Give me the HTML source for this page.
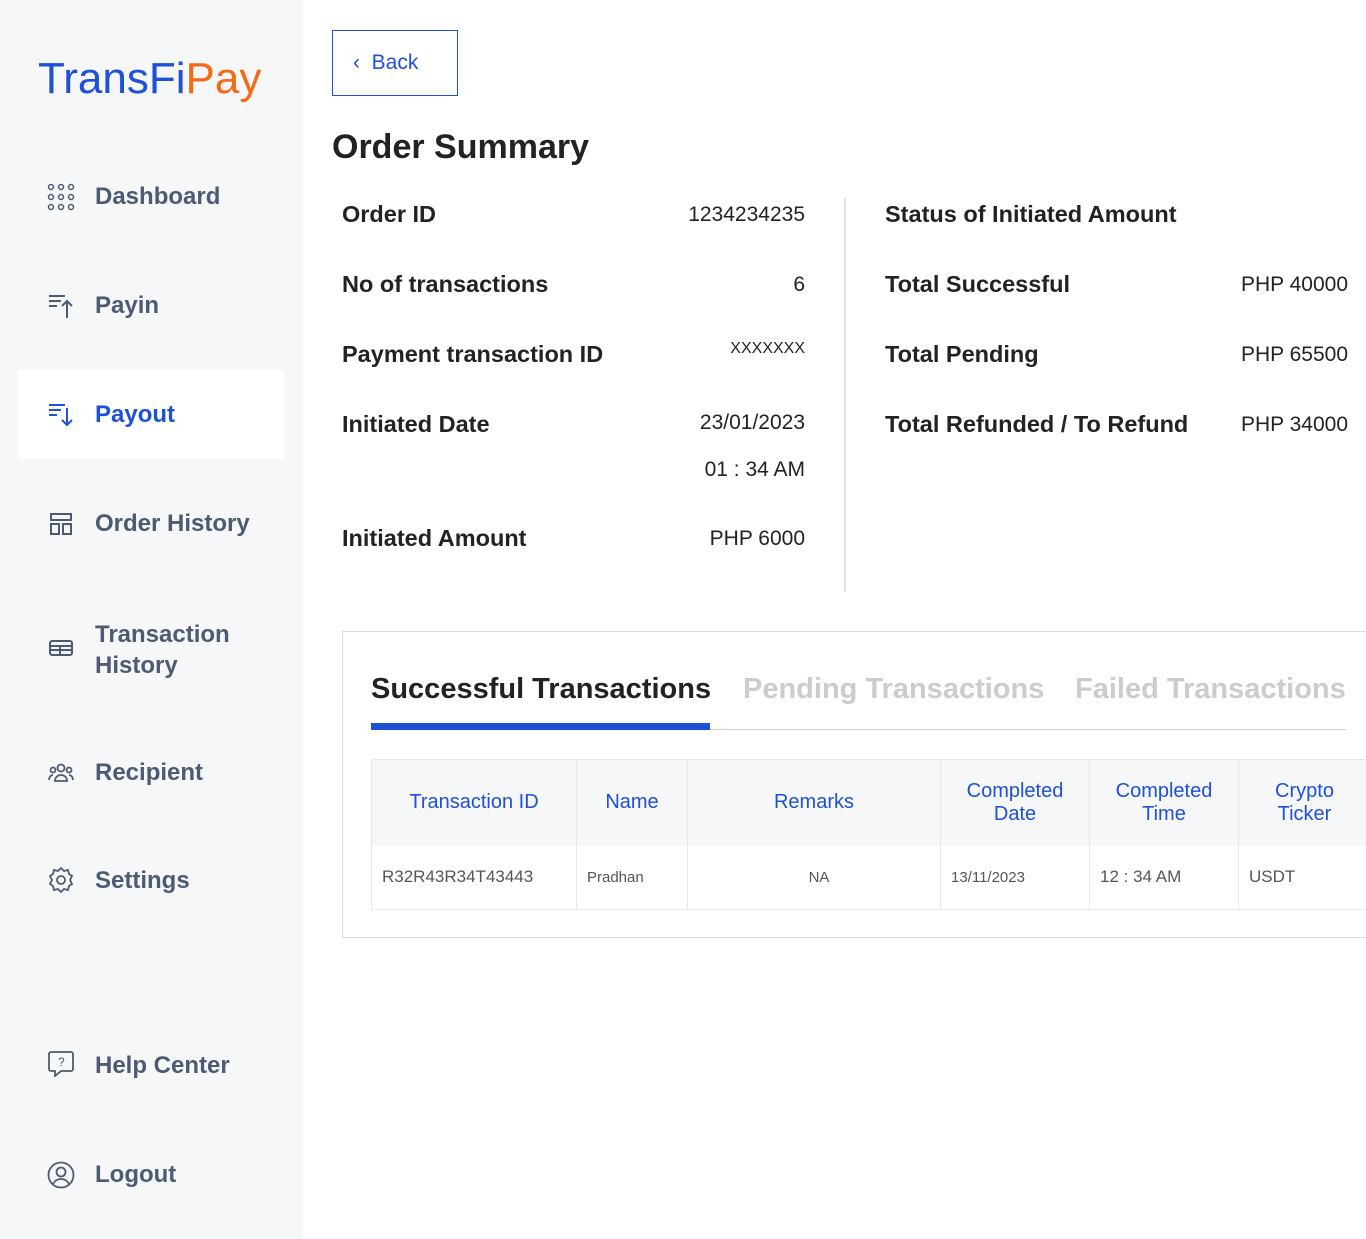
<!DOCTYPE html>
<html><head><style>
*{box-sizing:border-box;margin:0;padding:0}
body{width:1366px;height:1239px;background:#fff;font-family:"Liberation Sans",sans-serif;position:relative;overflow:hidden}
.side{position:absolute;left:0;top:0;width:303px;height:1239px;background:#f6f7f9}
.logo{position:absolute;left:38px;top:54px;font-size:44px;color:#1e50d8;letter-spacing:0px}
.logo span{color:#f36b16}
.nav{position:absolute;left:95px;font-size:24px;font-weight:bold;color:#4e5a74}
.ic{position:absolute;left:47px;width:28px;height:28px}
.act{position:absolute;left:18px;top:370px;width:266px;height:89px;background:#fff}
.t{position:absolute;font-size:23.5px;font-weight:bold;color:#222;}
.v{position:absolute;font-size:21px;color:#222;text-align:right}
th{color:#1e50d8;font-weight:normal;font-size:20px;background:#f6f7f9;border-right:1px solid #e8e8e8;height:86px}
td{font-size:17px;color:#555;border-right:1px solid #e8e8e8;height:64px;padding-left:10px}
</style></head><body>
<div class="side">
<div class="logo">TransFi<span>Pay</span></div>
<svg class="ic" style="top:183px" viewBox="0 0 28 28" fill="none" stroke="#4e5a74" stroke-width="1.5"><circle cx="4" cy="4" r="2.5"/><circle cx="14" cy="4" r="2.5"/><circle cx="24" cy="4" r="2.5"/><circle cx="4" cy="14" r="2.5"/><circle cx="14" cy="14" r="2.5"/><circle cx="24" cy="14" r="2.5"/><circle cx="4" cy="24" r="2.5"/><circle cx="14" cy="24" r="2.5"/><circle cx="24" cy="24" r="2.5"/></svg>
<div class="nav" style="top:183px">Dashboard</div>
<svg class="ic" style="top:292px" viewBox="0 0 28 28" fill="none" stroke="#4e5a74" stroke-width="2"><path d="M2 4h16M2 9h12M2 14h8M20 26V9M15 14l5-5 5 5"/></svg>
<div class="nav" style="top:292px">Payin</div>
<div class="act"></div>
<svg class="ic" style="top:401px" viewBox="0 0 28 28" fill="none" stroke="#1e50d8" stroke-width="2"><path d="M2 4h16M2 9h12M2 14h8M20 7v17M15 19l5 5 5-5"/></svg>
<div class="nav" style="top:401px;color:#1e50d8">Payout</div>
<svg class="ic" style="top:510px" viewBox="0 0 28 28" fill="none" stroke="#4e5a74" stroke-width="2"><rect x="4" y="4" width="20" height="6"/><rect x="4" y="14" width="8" height="10"/><rect x="16" y="14" width="8" height="10"/></svg>
<div class="nav" style="top:510px">Order History</div>
<svg class="ic" style="top:634px" viewBox="0 0 28 28" fill="none" stroke="#4e5a74" stroke-width="2"><rect x="3" y="7" width="22" height="14" rx="2"/><path d="M3 12h22M3 16h22M13 12v9"/></svg>
<div class="nav" style="top:619px;line-height:31px">Transaction<br>History</div>
<svg class="ic" style="top:759px" viewBox="0 0 28 28" fill="none" stroke="#4e5a74" stroke-width="1.8"><circle cx="14" cy="9" r="3.5"/><circle cx="6" cy="11" r="2.5"/><circle cx="22" cy="11" r="2.5"/><path d="M8 22c0-4 3-6 6-6s6 2 6 6zM2 21c0-3 2-5 4-5M26 21c0-3-2-5-4-5"/></svg>
<div class="nav" style="top:759px">Recipient</div>
<svg class="ic" style="top:866px" viewBox="0 0 28 28" fill="none" stroke="#4e5a74" stroke-width="1.8"><circle cx="14" cy="14" r="4"/><path d="M14 2l3 3 4-1 1 4 3 2-2 4 2 4-3 2-1 4-4-1-3 3-3-3-4 1-1-4-3-2 2-4-2-4 3-2 1-4 4 1z"/></svg>
<div class="nav" style="top:867px">Settings</div>
<svg class="ic" style="top:1049px" viewBox="0 0 28 28" fill="none" stroke="#4e5a74" stroke-width="1.8"><path d="M4 3h20a2 2 0 012 2v15a2 2 0 01-2 2H14l-6 5v-5H4a2 2 0 01-2-2V5a2 2 0 012-2z"/><text x="11" y="17" font-size="12" fill="#4e5a74" stroke="none" font-family="Liberation Sans">?</text></svg>
<div class="nav" style="top:1052px">Help Center</div>
<svg class="ic" style="top:1161px" viewBox="0 0 28 28" fill="none" stroke="#4e5a74" stroke-width="1.8"><circle cx="14" cy="14" r="12.5"/><circle cx="14" cy="11" r="4.5"/><path d="M6 23c2-4 5-5 8-5s6 1 8 5"/></svg>
<div class="nav" style="top:1161px">Logout</div>
</div>

<div style="position:absolute;left:332px;top:30px;width:126px;height:66px;border:1.5px solid #1e50d8;color:#1e50d8;font-size:21px;line-height:64px;padding-left:20px">&#8249;&nbsp; Back</div>
<div style="position:absolute;left:332px;top:128px;font-size:34px;font-weight:bold;color:#222">Order Summary</div>

<div class="t" style="left:342px;top:201px">Order ID</div><div class="v" style="right:561px;top:203px">1234234235</div>
<div class="t" style="left:342px;top:271px">No of transactions</div><div class="v" style="right:561px;top:273px">6</div>
<div class="t" style="left:342px;top:341px">Payment transaction ID</div><div class="v" style="right:561px;top:340px;font-size:16px">XXXXXXX</div>
<div class="t" style="left:342px;top:411px">Initiated Date</div><div class="v" style="right:561px;top:411px">23/01/2023</div>
<div class="v" style="right:561px;top:458px">01 : 34 AM</div>
<div class="t" style="left:342px;top:525px">Initiated Amount</div><div class="v" style="right:561px;top:527px">PHP 6000</div>
<div style="position:absolute;left:844px;top:198px;width:2px;height:394px;background:#e4e4e4"></div>
<div class="t" style="left:885px;top:201px">Status of Initiated Amount</div>
<div class="t" style="left:885px;top:271px">Total Successful</div><div class="v" style="right:18px;top:273px">PHP 40000</div>
<div class="t" style="left:885px;top:341px">Total Pending</div><div class="v" style="right:18px;top:343px">PHP 65500</div>
<div class="t" style="left:885px;top:411px">Total Refunded / To Refund</div><div class="v" style="right:18px;top:413px">PHP 34000</div>

<div style="position:absolute;left:342px;top:631px;width:1040px;height:307px;border:1.5px solid #ddd">
<div style="position:absolute;left:28px;top:41px;font-size:29px;font-weight:bold;color:#222">Successful Transactions</div>
<div style="position:absolute;left:400px;top:41px;font-size:29px;font-weight:bold;color:#ccc">Pending Transactions</div>
<div style="position:absolute;left:732px;top:41px;font-size:29px;font-weight:bold;color:#ccc">Failed Transactions</div>
<div style="position:absolute;left:28px;top:97px;width:975px;height:1px;background:#ccc"></div>
<div style="position:absolute;left:28px;top:91px;width:339px;height:7px;background:#1e50d8"></div>
<table style="position:absolute;left:28px;top:127px;border-collapse:collapse;border:1px solid #e8e8e8;width:1000px">
<tr><th style="width:205px">Transaction ID</th><th style="width:111px">Name</th><th style="width:253px">Remarks</th><th style="width:149px">Completed<br>Date</th><th style="width:149px">Completed<br>Time</th><th>Crypto<br>Ticker</th></tr>
<tr><td>R32R43R34T43443</td><td style="font-size:15px">Pradhan</td><td style="text-align:center;font-size:15px">NA</td><td style="font-size:15px">13/11/2023</td><td>12 : 34 AM</td><td>USDT</td></tr>
</table>
</div>
</body></html>
